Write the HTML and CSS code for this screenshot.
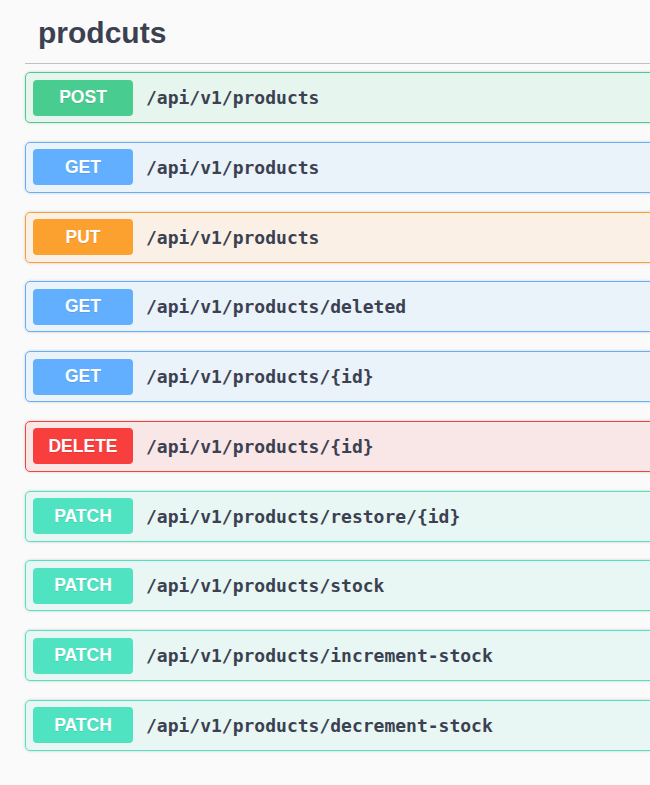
FILE: index.html
```html
<!DOCTYPE html>
<html>
<head>
<meta charset="utf-8">
<link rel="stylesheet" href="styles.css">
</head>
<body>
<div class="tag">
  <h3 class="tag-title">prodcuts</h3>
  <div class="ops">
    <div class="op post"><span class="method">POST</span><span class="path">/api/v1/products</span></div>
    <div class="op get"><span class="method">GET</span><span class="path">/api/v1/products</span></div>
    <div class="op put"><span class="method">PUT</span><span class="path">/api/v1/products</span></div>
    <div class="op get"><span class="method">GET</span><span class="path">/api/v1/products/deleted</span></div>
    <div class="op get"><span class="method">GET</span><span class="path">/api/v1/products/{id}</span></div>
    <div class="op delete"><span class="method">DELETE</span><span class="path">/api/v1/products/{id}</span></div>
    <div class="op patch"><span class="method">PATCH</span><span class="path">/api/v1/products/restore/{id}</span></div>
    <div class="op patch"><span class="method">PATCH</span><span class="path">/api/v1/products/stock</span></div>
    <div class="op patch"><span class="method">PATCH</span><span class="path">/api/v1/products/increment-stock</span></div>
    <div class="op patch"><span class="method">PATCH</span><span class="path">/api/v1/products/decrement-stock</span></div>
  </div>
</div>
</body>
</html>
```

FILE: styles.css
```css
html, body {
  margin: 0;
  padding: 0;
  background: #fafafa;
  overflow: hidden;
  height: 785px;
}

.tag {
  margin-left: 25px;
  width: 720px;
}

.tag-title {
  margin: 0;
  height: 63px;
  box-sizing: border-box;
  padding: 14px 0 0 13px;
  font-family: "Liberation Sans", Arial, sans-serif;
  font-weight: 700;
  font-size: 30px;
  line-height: 38px;
  color: #3b4151;
  border-bottom: 1px solid rgba(59, 65, 81, 0.3);
  height: 64px;
}

.ops {
  padding-top: 8px;
}

.op {
  display: flex;
  align-items: center;
  box-sizing: border-box;
  height: 51px;
  padding: 0 7px;
  margin-bottom: 18.75px;
  border: 1px solid;
  border-radius: 5px;
  box-shadow: 0 0 3px rgba(0, 0, 0, 0.19);
}

.method {
  width: 100px;
  height: 36px;
  border-radius: 4px;
  display: flex;
  align-items: center;
  justify-content: center;
  font-family: "Liberation Sans", Arial, sans-serif;
  font-weight: 700;
  font-size: 17.5px;
  color: #fff;
  text-shadow: 0 1px 0 rgba(0, 0, 0, 0.1);
  flex: none;
}

.path {
  padding-left: 13px;
  font-family: "DejaVu Sans Mono", monospace;
  font-weight: 700;
  font-size: 18px;
  color: #3b4151;
}

.post { background: rgba(73, 204, 144, 0.1); border-color: #49cc90; }
.post .method { background: #49cc90; }
.get { background: rgba(97, 175, 254, 0.1); border-color: #61affe; }
.get .method { background: #61affe; }
.put { background: rgba(252, 161, 48, 0.1); border-color: #fca130; }
.put .method { background: #fca130; }
.delete { background: rgba(249, 62, 62, 0.1); border-color: #f93e3e; }
.delete .method { background: #f93e3e; }
.patch { background: rgba(80, 227, 194, 0.1); border-color: #50e3c2; }
.patch .method { background: #50e3c2; }
```
